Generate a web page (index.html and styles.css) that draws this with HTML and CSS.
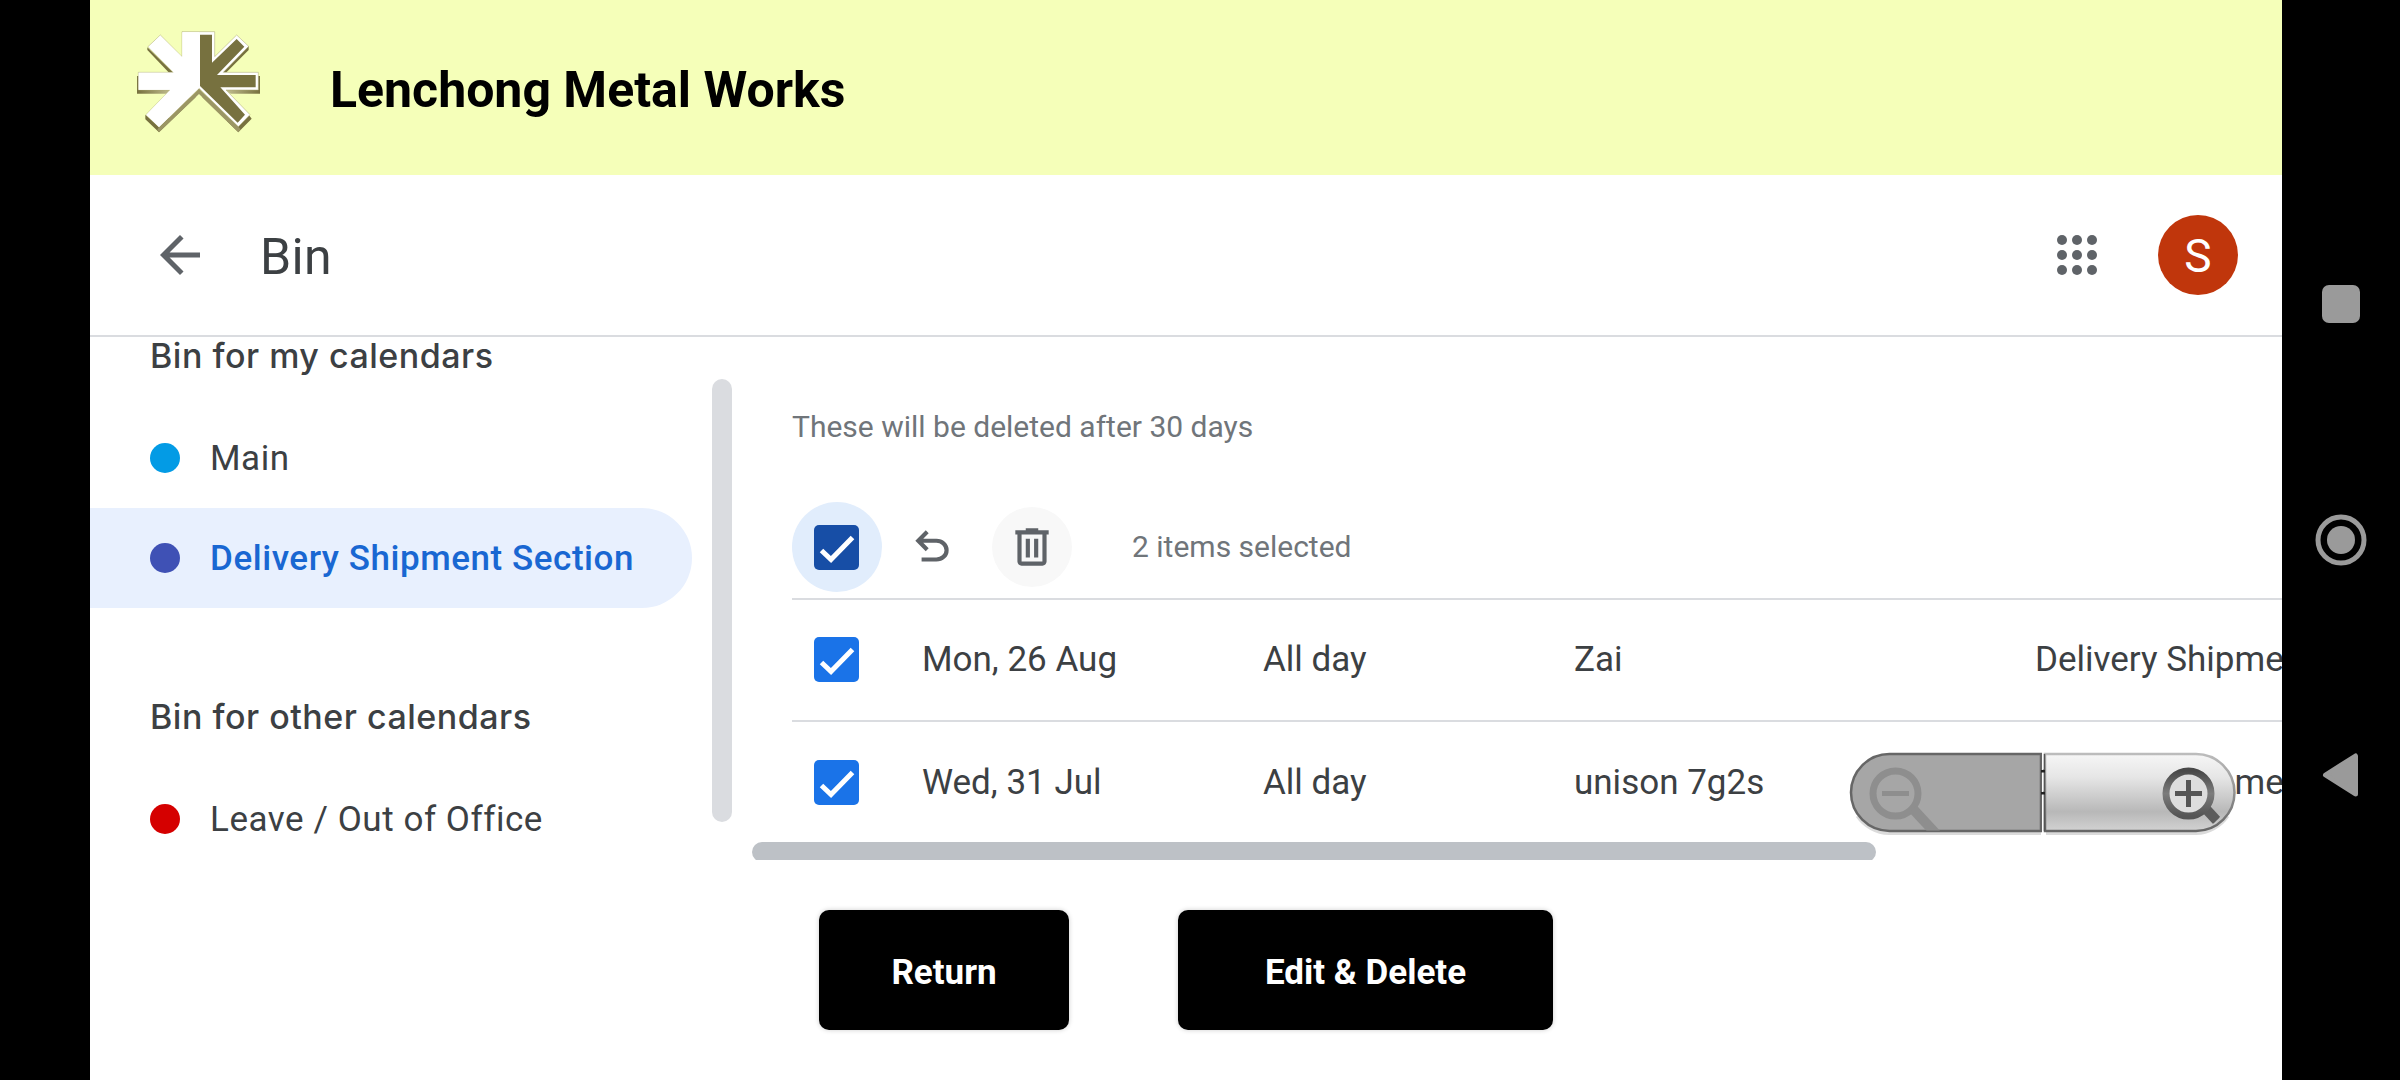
FILE: index.html
```html
<!DOCTYPE html>
<html lang="en">
<head>
<meta charset="utf-8">
<title>Bin</title>
<link rel="stylesheet" href="styles.css">
</head>
<body>
<div class="device">
  <main class="app">
    <header class="brand">
      <svg class="brand-logo" viewBox="0 0 450 375">
        <defs>
          <linearGradient id="edge" x1="0" x2="1" y1="0" y2="0">
            <stop offset="0" stop-color="#77713f"/><stop offset=".35" stop-color="#d5d2a4"/>
            <stop offset=".65" stop-color="#d5d2a4"/><stop offset="1" stop-color="#77713f"/>
          </linearGradient>
        </defs>
        <path fill="#77713f" d="M82 82L160 158 160 172 82 90zM76 284V298L117 337 237 222V206L117 320zM237 206V222L355 337 395 296 386 284 355 318zM386 78V90L318 158H300z"/>
        <path fill="url(#edge)" d="M51 168H420V221H51z"/>
        <path fill="#c3c08e" d="M237 206V220L320 303 330 296zM237 206V220L155 300 145 290z"/>
        <path fill="#f5ffb9" d="M150 211L130 232H345L318 211z"/>
        <path fill="#9b9664" d="M237 206V222L355 337 362 328zM237 206V222L117 337 112 328z"/>
        <path fill="#fff" stroke="#a8a46f" stroke-width="1.5" d="M186 35H284V110L350 45 386 79 310 157H415V210H318L390 284 355 320 237 205 117 322 78 284 150 210H55V157H160L84 80 121 45 186 110z"/>
        <path fill="#77713f" d="M240 44H276V128L350 57 373 80 291 165H407V202H301L375 284 353 308 240 198z"/>
        <path fill="#fff" d="M187 37H238V203L117 321 79 284 151 209H56V158H162L86 80 121 47 187 112z"/>
      </svg>
      <h1 class="brand-name">Lenchong Metal Works</h1>
    </header>

    <div class="toolbar">
      <svg class="icon-lg" viewBox="0 0 24 24"><path d="M20 11H7.83l5.59-5.59L12 4l-8 8 8 8 1.41-1.41L7.83 13H20v-2z"/></svg>
      <h2 class="page-title">Bin</h2>
      <svg class="icon-lg apps" viewBox="0 0 24 24">
        <circle cx="6" cy="6" r="2"/><circle cx="12" cy="6" r="2"/><circle cx="18" cy="6" r="2"/>
        <circle cx="6" cy="12" r="2"/><circle cx="12" cy="12" r="2"/><circle cx="18" cy="12" r="2"/>
        <circle cx="6" cy="18" r="2"/><circle cx="12" cy="18" r="2"/><circle cx="18" cy="18" r="2"/>
      </svg>
      <div class="avatar">S</div>
    </div>

    <div class="content">
      <nav class="sidebar">
        <h3 class="group-title">Bin for my calendars</h3>
        <div class="calendar"><span class="dot blue"></span><span>Main</span></div>
        <div class="calendar selected"><span class="dot indigo"></span><span>Delivery Shipment Section</span></div>
        <h3 class="group-title second">Bin for other calendars</h3>
        <div class="calendar"><span class="dot red"></span><span>Leave / Out of Office</span></div>
      </nav>
      <div class="scroll-y"></div>

      <section class="bin">
        <p class="notice">These will be deleted after 30 days</p>
        <div class="actions">
          <div class="check-halo"><svg class="check dark" viewBox="0 0 45 45"><path d="M7.500 25.500L17 34.500 38.500 12.500"/></svg></div>
          <svg class="icon-md undo" viewBox="0 -960 960 960"><path d="M280-200v-80h284q63 0 109.500-40T720-420q0-60-46.500-100T564-560H312l104 104-56 56-200-200 200-200 56 56-104 104h252q97 0 166.500 63T800-420q0 94-69.500 157T564-200H280Z"/></svg>
          <div class="trash"><svg class="icon-md" viewBox="0 0 24 24"><path d="M15 4V3H9v1H4v2h1v13c0 1.100.9 2 2 2h10c1.100 0 2-.9 2-2V6h1V4h-5zm2 15H7V6h10v13zM9 8h2v9H9zm4 0h2v9h-2z"/></svg></div>
          <span class="count">2 items selected</span>
        </div>
        <div class="row">
          <svg class="check" viewBox="0 0 45 45"><path d="M7.500 25.500L17 34.500 38.500 12.500"/></svg>
          <span>Mon, 26 Aug</span><span>All day</span><span>Zai</span><span>Delivery Shipment Section</span>
        </div>
        <div class="row">
          <svg class="check" viewBox="0 0 45 45"><path d="M7.500 25.500L17 34.500 38.500 12.500"/></svg>
          <span>Wed, 31 Jul</span><span>All day</span><span>unison 7g2s</span><span>Delivery Shipment Section</span>
        </div>
        <div class="scroll-x"></div>
      </section>
    </div>

    <footer class="buttons">
      <button class="button">Return</button>
      <button class="button wide">Edit &amp; Delete</button>
    </footer>

    <svg class="zoom" viewBox="0 0 394 92">
      <defs>
        <linearGradient id="plate" x1="0" x2="0" y1="0" y2="1">
          <stop offset="0" stop-color="#f6f6f6"/><stop offset=".3" stop-color="#e6e6e6"/>
          <stop offset=".75" stop-color="#b8b8b8"/><stop offset="1" stop-color="#d2d2d2"/>
        </linearGradient>
        <linearGradient id="rim" x1="0" x2="0" y1="0" y2="1">
          <stop offset="0" stop-color="#bcbcbc"/><stop offset="1" stop-color="#666"/>
        </linearGradient>
        <linearGradient id="lens" x1="0" x2="0" y1="0" y2="1">
          <stop offset="0" stop-color="#484848"/><stop offset=".5" stop-color="#7c7c7c"/><stop offset="1" stop-color="#555"/>
        </linearGradient>
        <clipPath id="left"><path d="M194 8H42a38.500 38.500 0 0 0 0 75.500H194z"/></clipPath>
        <clipPath id="right"><path d="M198 8H349a38.500 38.500 0 0 1 0 76H198z"/></clipPath>
      </defs>
      <path fill="none" stroke="#000" stroke-opacity=".14" stroke-width="5" d="M194 85.500H42a39 39 0 0 1-31-17M199 85.500H349a39 39 0 0 0 31-17"/>
      <path fill="#a6a6a6" stroke="#666" stroke-width="2.500" d="M194 7H42.500a38.500 38.500 0 0 0 0 77H194z"/>
      <path fill="none" stroke="#fff" stroke-width="1.500" d="M195.800 5V86"/>
      <path fill="url(#plate)" stroke="url(#rim)" stroke-width="2.500" d="M198 7H349a38.500 38.500 0 0 1 0 77H198z"/>
      <path stroke="#555" stroke-width="1.500" d="M197.500 7V84"/>
      <path fill="#222" d="M194 23h4v2.500h-4zM194 45h4v2.500h-4z"/>
      <g clip-path="url(#left)" fill="none" stroke="#8e8e8e">
        <circle cx="48.500" cy="46.500" r="22.500" stroke-width="7"/>
        <path stroke-width="5" d="M35 46.500H62"/>
        <path stroke-width="10" d="M66 62L92 90"/>
      </g>
      <g clip-path="url(#right)" fill="none">
        <path stroke="#5c5c5c" stroke-width="10" d="M359 62L385 90"/>
        <circle cx="341.500" cy="46.500" r="20" fill="#ddd"/>
        <circle cx="341.500" cy="46.500" r="22.500" stroke="url(#lens)" stroke-width="7"/>
        <path stroke="#555" stroke-width="5" d="M328 46.500H355M341.500 33V60"/>
      </g>
    </svg>
  </main>

  <aside class="system-nav">
    <svg viewBox="0 0 52 52"><rect x="7" y="7" width="38" height="38" rx="7"/></svg>
    <svg viewBox="0 0 52 52"><circle cx="26" cy="26" r="14"/><circle class="ring" cx="26" cy="26" r="23"/></svg>
    <svg viewBox="0 0 52 52"><path class="back" d="M10.500 25L40.500 6V44z"/></svg>
  </aside>
</div>
</body>
</html>
```
FILE: styles.css
```css
* { box-sizing: border-box; }

body {
  margin: 0;
  background: #000;
  font-family: Roboto, "Liberation Sans", sans-serif;
  color: #3c4043;
}

h1, h2, h3, p { margin: 0; font-weight: 400; }
svg { display: block; flex: none; }

.device {
  display: flex;
  width: 2400px;
  height: 1080px;
  padding-left: 90px;
  overflow: hidden;
}

.app {
  position: relative;
  display: flex;
  flex-direction: column;
  width: 2192px;
  background: #fff;
  overflow: hidden;
}

.brand {
  display: flex;
  align-items: flex-start;
  height: 175px;
  padding: 20px 30px;
  background: #f5ffb9;
}
.brand-logo { width: 150px; height: 125px; }
.brand-name {
  margin-left: 60px;
  font-size: 50px;
  font-weight: 700;
  line-height: 140px;
  color: #000;
}

.toolbar {
  display: flex;
  align-items: center;
  height: 162px;
  padding: 0 44px 0 60px;
  border-bottom: 2px solid #dadce0;
}
.icon-lg { width: 60px; height: 60px; fill: #5f6368; }
.icon-md { width: 50px; height: 50px; fill: #5f6368; }
.page-title {
  margin-left: 50px;
  padding-top: 4px;
  font-size: 50px;
  line-height: 60px;
  letter-spacing: .4px;
}
.apps { margin-left: auto; }
.avatar {
  width: 80px;
  height: 80px;
  margin-left: 51px;
  border-radius: 50%;
  background: #c0360c;
  color: #fff;
  font-size: 46px;
  line-height: 82px;
  text-align: center;
}

.content {
  display: flex;
  height: 523px;
  overflow: hidden;
}

.sidebar { width: 602px; flex: none; }
.group-title {
  padding-left: 60px;
  font-family: Inter, Roboto, sans-serif;
  font-size: 34px;
  font-weight: 500;
  line-height: 37px;
  letter-spacing: .5px;
  margin-bottom: 34px;
}
.group-title.second { margin-top: 90px; }
.calendar {
  display: flex;
  align-items: center;
  gap: 30px;
  height: 100px;
  padding-left: 60px;
  font-size: 35px;
  letter-spacing: .55px;
  white-space: nowrap;
}
.calendar.selected {
  background: #e8f0fe;
  border-radius: 0 50px 50px 0;
  color: #1967d2;
  font-weight: 500;
}
.dot { width: 30px; height: 30px; border-radius: 50%; }
.blue { background: #039be5; }
.indigo { background: #3f51b5; }
.red { background: #d50000; }

.scroll-y {
  flex: none;
  width: 20px;
  height: 443px;
  margin: 42px 20px 0;
  border-radius: 10px;
  background: #dadce0;
}

.bin {
  flex: 1;
  min-width: 0;
  padding-left: 40px;
  overflow: hidden;
}
.notice {
  padding-top: 70px;
  font-size: 30px;
  line-height: 40px;
  color: #70757a;
}
.actions {
  display: flex;
  align-items: center;
  height: 108px;
  margin-top: 45px;
  padding-top: 4px;
  border-bottom: 2px solid #dadce0;
}
.check-halo {
  display: flex;
  align-items: center;
  width: 90px;
  height: 90px;
  padding-left: 22px;
  border-radius: 50%;
  background: #e1edfc;
}
.check {
  width: 45px;
  height: 45px;
  border-radius: 5px;
  background: #1a73e8;
  fill: none;
  stroke: #fff;
  stroke-width: 5;
}
.check.dark { background: #174ea6; }
.undo { margin-left: 25px; }
.trash {
  display: flex;
  align-items: center;
  justify-content: center;
  width: 80px;
  height: 80px;
  margin-left: 35px;
  border-radius: 50%;
  background: #f8f8f8;
}
.count {
  margin-left: 60px;
  padding-bottom: 2px;
  font-size: 30px;
  color: #70757a;
}

.row {
  display: grid;
  grid-template-columns: 108px 341px 311px 461px 500px;
  align-items: center;
  height: 122px;
  padding-left: 22px;
  padding-bottom: 1px;
  font-size: 35px;
  white-space: nowrap;
  border-bottom: 2px solid #dadce0;
}
.row + .row { height: 120px; border-bottom: 0; padding-bottom: 0; }

.scroll-x {
  width: 1124px;
  height: 20px;
  margin-left: -40px;
  border-radius: 10px;
  background: #bdc1c6;
}

.buttons {
  display: flex;
  gap: 109px;
  padding: 50px 0 0 729px;
}
.button {
  width: 250px;
  height: 120px;
  padding: 4px 0 0;
  border: 0;
  border-radius: 10px;
  background: #000;
  color: #fff;
  font: 700 35px/1 Roboto, sans-serif;
  box-shadow: 0 0 5px rgba(0, 0, 0, .2);
}
.button.wide { width: 375px; }

/* Floating zoom control over the list */
.zoom {
  position: absolute;
  left: 1757px;
  top: 747px;
  width: 394px;
  height: 92px;
}

.system-nav {
  display: flex;
  flex-direction: column;
  align-items: center;
  gap: 184px;
  width: 118px;
  padding-top: 278px;
}
.system-nav svg { width: 52px; height: 52px; fill: #9a9a9a; }
.system-nav .ring { fill: none; stroke: #9a9a9a; stroke-width: 5; }
.back { stroke: #9a9a9a; stroke-width: 5; stroke-linejoin: round; }
```
